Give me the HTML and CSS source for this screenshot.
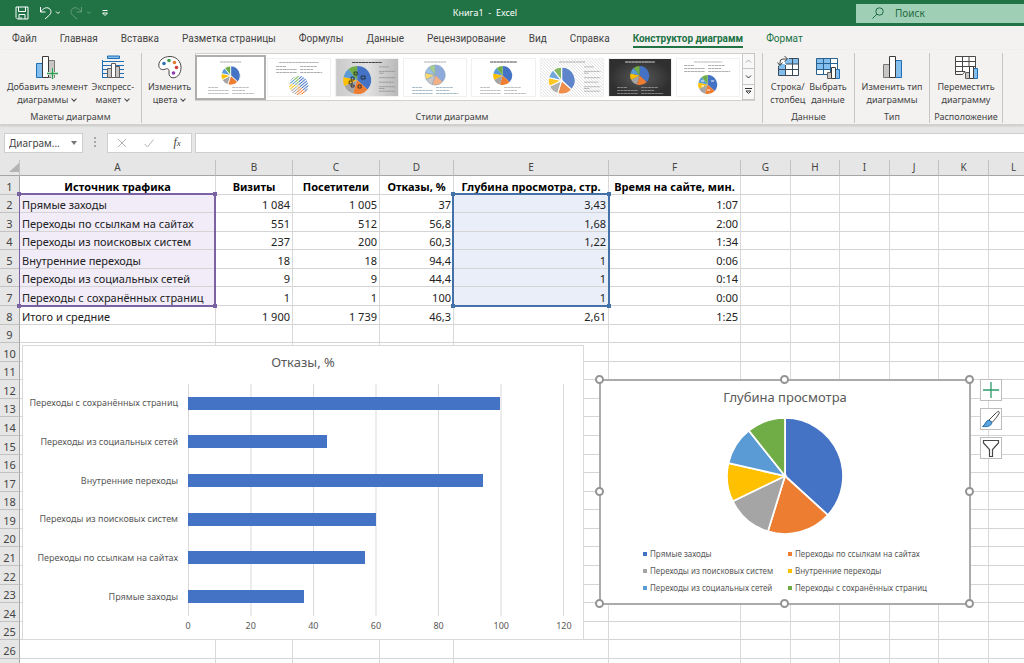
FILE: index.html
```html
<!DOCTYPE html>
<html lang="ru">
<head>
<meta charset="utf-8">
<title>Книга1 - Excel</title>
<link rel="stylesheet" href="styles.css">
</head>
<body>
<svg class="defs" aria-hidden="true">
  <defs>
    <symbol id="pie" viewBox="-100 -100 200 200" overflow="visible">
      <path class="s1" d="M0 0V-100A100 100 0 0 1 73.9 67.4Z"/>
      <path class="s2" d="M0 0L73.9 67.4A100 100 0 0 1 -29.5 95.5Z"/>
      <path class="s3" d="M0 0L-29.5 95.5A100 100 0 0 1 -90.1 43.5Z"/>
      <path class="s4" d="M0 0L-90.1 43.5A100 100 0 0 1 -97.5 -22.2Z"/>
      <path class="s5" d="M0 0L-97.5 -22.2A100 100 0 0 1 -62.4 -78.2Z"/>
      <path class="s6" d="M0 0L-62.4 -78.2A100 100 0 0 1 0 -100Z"/>
    </symbol>
    <symbol id="legend-lines" viewBox="0 0 46 10" overflow="visible">
      <path d="M0 1.500H10M24 1.500H41M0 4.500H21M24 4.500H37M0 7.500H21M24 7.500H46" fill="none" stroke="currentColor" stroke-width=".8" stroke-dasharray="3 .4"/>
    </symbol>
    <symbol id="side-lines" viewBox="0 0 20 30" overflow="visible">
      <path d="M0 1H11M0 6H18M0 8H5M0 13H18M0 18H16M0 23H18M0 25H6M0 28H18" fill="none" stroke="currentColor" stroke-width=".8" stroke-dasharray="3 .4"/>
    </symbol>
    <pattern id="hatch" width="3" height="3" patternUnits="userSpaceOnUse">
      <path d="M0 0L3 3" stroke="#d4d4d4" stroke-width=".7"/>
    </pattern>
    <pattern id="stripes" width="14" height="14" patternUnits="userSpaceOnUse" patternTransform="rotate(-40)">
      <path d="M0 4H14" stroke="#fff" stroke-width="8"/>
    </pattern>
    <linearGradient id="grey" x1="0" x2="1"><stop offset="0" stop-color="#c9c9c9"/><stop offset=".5" stop-color="#e2e2e2"/><stop offset="1" stop-color="#b9b9b9"/></linearGradient>
    <radialGradient id="dark"><stop offset="0" stop-color="#5a5a5a"/><stop offset="1" stop-color="#2f2f2f"/></radialGradient>
  </defs>
</svg>

<header class="titlebar">
  <div class="quick">
    <button aria-label="Сохранить"><svg width="14" height="14" viewBox="0 0 14 14"><path d="M1 1H13V13H2.500L1 11.500ZM3.500 1V5.500H10.500V1M4 13V8.500H10V13M6 13V11"/></svg></button>
    <button aria-label="Отменить"><svg width="21" height="14" viewBox="0 0 21 14"><path d="M1.500 1V6H6.500M1.500 6C4 2.500 7 .8 10 2.300C12.500 4 12.500 7 10.500 9L6 13"/><path d="M17 5.500L19 7.500L21 5.500"/></svg></button>
    <button class="off" aria-label="Повторить"><svg width="21" height="14" viewBox="0 0 21 14"><path d="M11.500 1V6H6.500M11.500 6C9 2.500 6 .8 3 2.300C.5 4 .5 7 2.500 9L7 13"/><path d="M17 5.500L19 7.500L21 5.500"/></svg></button>
    <button class="more" aria-label="Настройка панели"><svg width="8" height="8" viewBox="0 0 8 8"><path d="M1.500 1.500H6.500M1.500 4L4 6.500L6.500 4Z"/></svg></button>
  </div>
  <h1>Книга1&nbsp; -&nbsp; Excel</h1>
  <label class="search"><svg width="12" height="12" viewBox="0 0 12 12"><circle cx="7.500" cy="4.500" r="3.700"/><path d="M4.800 7.200L.5 11.500"/></svg><input type="text" placeholder="Поиск" aria-label="Поиск"></label>
</header>

<nav class="tabs">
  <button>Файл</button><button>Главная</button><button>Вставка</button><button>Разметка страницы</button><button>Формулы</button><button>Данные</button><button>Рецензирование</button><button>Вид</button><button>Справка</button><button class="active">Конструктор диаграмм</button><button class="context">Формат</button>
</nav>

<section class="ribbon">
  <div class="group g-layouts">
    <div class="tools">
      <button><svg width="24" height="24" viewBox="0 0 24 24"><path d="M1.500 8.500H7.500V22.500H1.500Z" fill="#83beec" stroke="#1e6fb5"/><path d="M13.500 5.500H19.500V22.500H13.500Z" fill="#c8c6c4" stroke="#797774"/><path d="M7.500 1.500H13.500V22.500H7.500Z" fill="#fff" stroke="#3b3a39"/><path d="M17.500 13V24M12 18.500H23" stroke="#f3f2f1" stroke-width="3"/><path d="M17.500 13V24M12 18.500H23" stroke="#2e9b50" stroke-width="1.500"/></svg><span>Добавить элемент<br>диаграммы<i></i></span></button>
      <button><svg width="24" height="24" viewBox="0 0 24 24"><path d="M6.500 1H18.500V3.500H6.500Z" fill="#83beec" stroke="#1e6fb5"/><path d="M1.500 5V23M1.500 6.500H23M1.500 10.500H23M1.500 14.500H23M1.500 18.500H23M1.500 22.500H23" fill="none" stroke="#1e6fb5"/><path d="M6.500 13.500H10.500V22.500H6.500ZM14.500 11.500H18.500V22.500H14.500Z" fill="#c8c6c4" stroke="#605e5c"/><path d="M10.500 8.500H14.500V22.500H10.500Z" fill="#fff" stroke="#605e5c"/></svg><span>Экспресс-<br>макет<i></i></span></button>
    </div>
    <h2>Макеты диаграмм</h2>
  </div>
  <div class="group g-styles">
    <div class="tools">
      <button><svg width="24" height="24" viewBox="0 0 24 24"><path d="M12 1.500C5.500 1.500 .8 5.500 .8 10C.8 14 4 15.500 7 14.200C9.500 13 11.500 14 11 17C10.500 20 12 22.800 15 22.800C20 22.800 23 18 23 12.500C23 6 18 1.500 12 1.500Z" fill="#fff" stroke="#4a4846"/><circle cx="6" cy="8.500" r="1.800" fill="#2f6fb8"/><circle cx="11" cy="5.500" r="1.800" fill="#3c9b50"/><circle cx="16.500" cy="7.500" r="1.800" fill="#e2772e"/><circle cx="18.500" cy="12.500" r="1.800" fill="#d63b3b"/><circle cx="15.500" cy="18" r="1.800" fill="#8d3db0"/></svg><span>Изменить<br>цвета<i></i></span></button>
      <div class="gallery">
        <div class="thumbs">
          <button class="thumb chosen" aria-label="Стиль 1"><svg viewBox="0 0 62 37"><rect width="62" height="37" fill="#fff"/><path class="cap" d="M21 3H42"/><use href="#pie" x="22" y="7" width="19" height="19" class="gap"/><use href="#legend-lines" x="9" y="27" width="46" height="10" color="#b0b0b0"/></svg></button>
          <button class="thumb" aria-label="Стиль 2"><svg viewBox="0 0 62 37"><rect width="62" height="37" fill="#fff"/><path class="cap wide" d="M11 3.500H51"/><use href="#legend-lines" x="8" y="6" width="46" height="10" color="#9a9a9a"/><use href="#pie" x="21" y="17" width="19" height="19"/><g transform="translate(30.500 26.500) scale(.16)"><circle r="64" fill="url(#stripes)"/></g></svg></button>
          <button class="thumb" aria-label="Стиль 3"><svg viewBox="0 0 62 37"><rect width="62" height="37" fill="url(#grey)"/><path class="cap strong" d="M16 3.500H46"/><use href="#pie" x="7" y="7" width="28" height="28"/><use href="#side-lines" x="43" y="6" width="18" height="29" color="#888"/><path d="M25 17H29V20H25ZM18 13H21V16H18ZM15 18H18V21H15ZM13 22H16V25H13ZM15 26H18V28H15ZM22 26H25V29H22Z" fill="none" stroke="#222" stroke-width=".8"/></svg></button>
          <button class="thumb" aria-label="Стиль 4"><svg viewBox="0 0 62 37"><rect width="62" height="37" fill="#fff"/><path class="cap" d="M20 3H42"/><use href="#pie" x="21" y="6" width="20" height="20" opacity=".6" stroke="#3d6496" stroke-width="6"/><use href="#legend-lines" x="8" y="27" width="46" height="10" color="#8fa9b8"/></svg></button>
          <button class="thumb" aria-label="Стиль 5"><svg viewBox="0 0 62 37"><rect width="62" height="37" fill="#fff"/><path class="cap strong" d="M18 3H45"/><use href="#pie" x="21" y="7" width="19" height="19"/><use href="#legend-lines" x="8" y="27" width="46" height="10" color="#b0b0b0"/></svg></button>
          <button class="thumb" aria-label="Стиль 6"><svg viewBox="0 0 62 37"><rect width="62" height="37" fill="#fff"/><rect width="62" height="37" fill="url(#hatch)"/><path class="cap" d="M18 3H44"/><use href="#pie" x="7" y="8" width="27" height="27" class="gap" opacity=".85"/><use href="#side-lines" x="43" y="6" width="18" height="29" color="#999"/></svg></button>
          <button class="thumb" aria-label="Стиль 7"><svg viewBox="0 0 62 37"><rect width="62" height="37" fill="url(#dark)"/><path class="cap pale" d="M16 3H46"/><use href="#pie" x="21" y="7" width="19" height="19"/><use href="#legend-lines" x="8" y="27" width="46" height="10" color="#999"/></svg></button>
          <button class="thumb" aria-label="Стиль 8"><svg viewBox="0 0 62 37"><rect width="62" height="37" fill="#fff"/><path class="cap wide" d="M17 3H45"/><use href="#legend-lines" x="7" y="5" width="46" height="10" color="#9a9a9a"/><use href="#pie" x="21" y="16" width="19" height="19"/><path d="M34 22H37M24 27H27M30 31H33M24 22H27" stroke="#fff" stroke-width="1"/></svg></button>
        </div>
        <div class="scroll">
          <button class="off" aria-label="Вверх"><svg width="7" height="7" viewBox="0 0 7 7"><path d="M1 4.500L3.500 2L6 4.500"/></svg></button>
          <button aria-label="Вниз"><svg width="7" height="7" viewBox="0 0 7 7"><path d="M1 2.500L3.500 5L6 2.500"/></svg></button>
          <button aria-label="Ещё"><svg width="7" height="7" viewBox="0 0 7 7"><path d="M0 .5H7M1 3L3.500 5.500L6 3Z"/></svg></button>
        </div>
      </div>
    </div>
    <h2>Стили диаграмм</h2>
  </div>
  <div class="group g-data">
    <div class="tools">
      <button><svg width="24" height="24" viewBox="0 0 24 24"><path d="M2.500 3.500H22.500V20.500H2.500Z" fill="#fff"/><path d="M2.500 9H9V20.500H2.500ZM9 3.500H22.500V9H9Z" fill="#83beec"/><path d="M2.500 11V20.500H22.500V3.500H13M2.500 14.500H22.500M10 9H22.500M9.500 10V20.500M16.500 3.500V20.500" fill="none" stroke="#3b4a58"/><path d="M4 9V7A3 3 0 0 1 7 4H10" fill="none" stroke="#f3f2f1" stroke-width="4"/><path d="M4 10V7A3 3 0 0 1 7 4H11M1.500 7.500L4 10.500L6.500 7.500M8.500 1L11.500 4L8.500 6.500" fill="none" stroke="#4a4846"/></svg><span>Строка/<br>столбец</span></button>
      <button><svg width="24" height="24" viewBox="0 0 24 24"><path d="M.5 3.500H21.500V19.500H.5Z" fill="#fff"/><path d="M.5 3.500H14.500V14.500H.5Z" fill="#83beec"/><path d="M.5 3.500H21.500V19.500H.5ZM.5 8.500H21.500M.5 14.500H21.500M7.500 3.500V19.500M14.500 3.500V19.500" fill="none" stroke="#27618f"/><path d="M11.500 17.500H15.500V23.500H11.500Z" fill="#c8c6c4" stroke="#605e5c"/><path d="M19.500 14.500H23.500V23.500H19.500Z" fill="#83beec" stroke="#1e6fb5"/><path d="M15.500 12.500H19.500V23.500H15.500Z" fill="#fff" stroke="#3b3a39"/></svg><span>Выбрать<br>данные</span></button>
    </div>
    <h2>Данные</h2>
  </div>
  <div class="group g-type">
    <div class="tools">
      <button><svg width="24" height="24" viewBox="0 0 24 24"><path d="M3.500 9.500H9.500V22.500H3.500Z" fill="#c8c6c4" stroke="#797774"/><path d="M15.500 5.500H21.500V22.500H15.500Z" fill="#83beec" stroke="#1e6fb5"/><path d="M9.500 1.500H15.500V22.500H9.500Z" fill="#fff" stroke="#3b3a39"/></svg><span>Изменить тип<br>диаграммы</span></button>
    </div>
    <h2>Тип</h2>
  </div>
  <div class="group g-place">
    <div class="tools">
      <button><svg width="24" height="24" viewBox="0 0 24 24"><path d="M1.500 1.500H21.500V19.500H8L6 16.500H1.500Z" fill="#fff"/><path d="M1.500 1.500H21.500V13M1.500 1.500V19.500H8.500L11 16.500M1.500 6.500H21.500M1.500 11.500H21.500M8.500 1.500V16M15 1.500V11M1.500 16.500H11" fill="none" stroke="#4a4846"/><path d="M11.500 17.500H15.500V23.500H11.500Z" fill="#c8c6c4" stroke="#605e5c"/><path d="M19.500 13.500H23.500V23.500H19.500Z" fill="#83beec" stroke="#1e6fb5"/><path d="M15.500 11.500H19.500V23.500H15.500Z" fill="#fff" stroke="#3b3a39"/></svg><span>Переместить<br>диаграмму</span></button>
    </div>
    <h2>Расположение</h2>
  </div>
</section>

<section class="formula">
  <div class="namebox"><input type="text" value="Диаграм..." aria-label="Имя"><button aria-label="Список имён"><svg width="6" height="4" viewBox="0 0 6 4"><path d="M0 0H6L3 4Z"/></svg></button></div>
  <svg class="dots" width="3" height="11" viewBox="0 0 3 11"><path d="M.5 0H2.500V2H.5ZM.5 4H2.500V6H.5ZM.5 8H2.500V10H.5Z"/></svg>
  <div class="entry">
    <button aria-label="Отмена"><svg width="10" height="10" viewBox="0 0 10 10"><path d="M1 1L9 9M9 1L1 9"/></svg></button>
    <button aria-label="Ввод"><svg width="10" height="10" viewBox="0 0 10 10"><path d="M.5 6L3.500 9L9.500 1.500"/></svg></button>
    <button class="fx" aria-label="Вставить функцию">f<small>x</small></button>
  </div>
  <input class="expression" type="text" aria-label="Строка формул">
</section>

<main class="sheet">
  <table>
    <colgroup><col class="c-n"><col class="c-a"><col class="c-b"><col class="c-c"><col class="c-d"><col class="c-e"><col class="c-f"><col class="c-g"><col class="c-h"><col class="c-g"><col class="c-h"><col class="c-g"><col class="c-g"></colgroup>
    <thead><tr><th class="corner"><svg width="10" height="9" viewBox="0 0 10 9"><path d="M10 0V9H0Z"/></svg></th><th>A</th><th>B</th><th>C</th><th>D</th><th>E</th><th>F</th><th>G</th><th>H</th><th>I</th><th>J</th><th>K</th><th>L</th></tr></thead>
    <tbody id="rows">
      <tr class="heads"><th>1</th><td>Источник трафика</td><td>Визиты</td><td>Посетители</td><td>Отказы, %</td><td>Глубина просмотра, стр.</td><td>Время на сайте, мин.</td></tr>
      <tr class="picked"><th>2</th><td>Прямые заходы</td><td>1 084</td><td>1 005</td><td>37</td><td>3,43</td><td>1:07</td></tr>
      <tr class="picked"><th>3</th><td>Переходы по ссылкам на сайтах</td><td>551</td><td>512</td><td>56,8</td><td>1,68</td><td>2:00</td></tr>
      <tr class="picked"><th>4</th><td>Переходы из поисковых систем</td><td>237</td><td>200</td><td>60,3</td><td>1,22</td><td>1:34</td></tr>
      <tr class="picked"><th>5</th><td>Внутренние переходы</td><td>18</td><td>18</td><td>94,4</td><td>1</td><td>0:06</td></tr>
      <tr class="picked"><th>6</th><td>Переходы из социальных сетей</td><td>9</td><td>9</td><td>44,4</td><td>1</td><td>0:14</td></tr>
      <tr class="picked"><th>7</th><td>Переходы с сохранённых страниц</td><td>1</td><td>1</td><td>100</td><td>1</td><td>0:00</td></tr>
      <tr><th>8</th><td>Итого и средние</td><td>1 900</td><td>1 739</td><td>46,3</td><td>2,61</td><td>1:25</td></tr>
    </tbody>
  </table>

  <div class="range names"><b></b><b></b><b></b><b></b></div>
  <div class="range values"><b></b><b></b><b></b><b></b></div>

  <figure class="chart bars">
    <figcaption>Отказы, %</figcaption>
    <div class="body">
      <ul class="cats"><li>Переходы с сохранённых страниц</li><li>Переходы из социальных сетей</li><li>Внутренние переходы</li><li>Переходы из поисковых систем</li><li>Переходы по ссылкам на сайтах</li><li>Прямые заходы</li></ul>
      <div class="plot"><div><i style="width:83.33%"></i></div><div><i style="width:37%"></i></div><div><i style="width:78.67%"></i></div><div><i style="width:50.25%"></i></div><div><i style="width:47.33%"></i></div><div><i style="width:30.83%"></i></div></div>
      <div class="axis"><span>0</span><span>20</span><span>40</span><span>60</span><span>80</span><span>100</span><span>120</span></div>
    </div>
  </figure>

  <figure class="chart depth">
    <figcaption>Глубина просмотра</figcaption>
    <svg class="pie" width="116" height="116" viewBox="0 0 116 116"><use href="#pie" width="116" height="116"/></svg>
    <ul class="legend"><li class="k1">Прямые заходы</li><li class="k2">Переходы по ссылкам на сайтах</li><li class="k3">Переходы из поисковых систем</li><li class="k4">Внутренние переходы</li><li class="k5">Переходы из социальных сетей</li><li class="k6">Переходы с сохранённых страниц</li></ul>
    <div class="handles"><b></b><b></b><b></b><b></b><b></b><b></b><b></b><b></b></div>
  </figure>

  <div class="side">
    <button aria-label="Элементы диаграммы"><svg width="20" height="20" viewBox="0 0 20 20"><path d="M10 2V18M2 10H18" stroke="#2e9b6a" stroke-width="1.300"/></svg></button>
    <button aria-label="Стили диаграмм"><svg width="20" height="20" viewBox="0 0 20 20"><path d="M8 11L15.500 3.500C17 2 19 2 18 4.500C16 8 13.500 11 11 13.500Z" fill="#fff" stroke="#4a4846"/><path d="M8 11L11 13.500C10 17.500 6 18 1.500 17.500C4 16.500 4.500 11.500 8 11Z" fill="#5ba3dc" stroke="#1e6fa8"/></svg></button>
    <button aria-label="Фильтры диаграммы"><svg width="20" height="20" viewBox="0 0 20 20"><path d="M2.500 2.500H17.500V5L11.500 11.500V18.500H8.500V11.500L2.500 5Z" fill="#fff" stroke="#4a4846" stroke-width="1.200"/></svg></button>
  </div>
</main>
<script src="sheet.js"></script>
</body>
</html>
```
FILE: styles.css
```css
:root {
  --ui: "Noto Sans", "Open Sans", sans-serif;
  --narrow: Roboto, "Noto Sans", sans-serif;
  --green: #217346;
}

* { box-sizing: border-box; }

body {
  margin: 0;
  height: 100vh;
  display: flex;
  flex-direction: column;
  overflow: hidden;
  background: #e6e6e6;
  color: #444;
  font: 10px/12px var(--ui);
}

button, input {
  margin: 0;
  padding: 0;
  border: 0;
  background: none;
  color: inherit;
  font: inherit;
}

h1, h2, ul, figure { margin: 0; padding: 0; font-weight: normal; list-style: none; }
svg { display: block; }
.defs { position: absolute; width: 0; height: 0; }

.s1 { fill: #4472c4; }
.s2 { fill: #ed7d31; }
.s3 { fill: #a5a5a5; }
.s4 { fill: #ffc000; }
.s5 { fill: #5b9bd5; }
.s6 { fill: #70ad47; }

/* Title bar */
.titlebar {
  display: grid;
  grid-template-columns: 114px 1fr 168px;
  align-items: center;
  height: 26px;
  background: var(--green);
  color: #fff;
}
.quick { display: flex; align-items: center; gap: 10px; padding-left: 15px; }
.quick svg { fill: none; stroke: #fff; }
.quick .off { opacity: .3; }
.titlebar h1 { font-size: 9px; text-align: center; }
.search {
  display: flex;
  align-items: center;
  gap: 11px;
  height: 19px;
  padding-left: 16px;
  background: #9fcfb5;
  color: #1e6b41;
}
.search svg { fill: none; stroke: #1e6b41; }
.search input { flex: 1; min-width: 0; }
.search input::placeholder { color: #1e6b41; opacity: 1; }

/* Tabs */
.tabs {
  display: flex;
  align-items: flex-end;
  gap: 23px;
  height: 24px;
  padding: 0 0 2px 12px;
  background: #f3f2f1;
  white-space: nowrap;
  font-family: var(--narrow);
}
.tabs button { height: 18px; padding-top: 2px; border-bottom: 2px solid transparent; }
.tabs .active { border-color: var(--green); color: var(--green); font-weight: bold; }
.tabs .context { color: var(--green); }

/* Ribbon */
.ribbon {
  display: flex;
  height: 75px;
  padding: 3px 0 1px;
  background: #f3f2f1;
  border-bottom: 1px solid #d2d0ce;
  box-shadow: 0 1px 2px #c8c6c4;
}
.group {
  display: flex;
  flex-direction: column;
  justify-content: space-between;
  border-right: 1px solid #c8c6c4;
}
.group h2 { font-size: 9px; text-align: center; line-height: 12px; }
.tools { display: flex; justify-content: center; gap: 4px; }
.tools > button {
  display: flex;
  flex-direction: column;
  align-items: center;
  gap: 1px;
  padding-top: 2px;
  white-space: nowrap;
}
.tools > button span { font-size: 9px; line-height: 13px; }
.tools i {
  display: inline-block;
  width: 4px;
  height: 4px;
  margin: 0 1px 2px 4px;
  border: solid #444;
  border-width: 0 1px 1px 0;
  transform: rotate(45deg);
}
.g-layouts { width: 142px; }
.g-styles { width: 621px; }
.g-styles .tools { justify-content: flex-start; padding-left: 6px; }
.g-data { width: 92px; }
.g-type { width: 75px; }
.g-place { width: 73px; }

.gallery {
  display: flex;
  width: 560px;
  height: 48px;
  border: 1px solid #d2d0ce;
  background: #fff;
}
.thumbs {
  flex: 1;
  display: grid;
  grid-template-columns: repeat(8, 1fr);
  gap: 6px;
  align-items: center;
  padding: 0 3px;
}
.thumb { outline: 1px solid #f0f0f0; }
.thumb svg { width: 100%; height: 37px; }
.thumb.chosen { outline: 2px solid #b0aeac; outline-offset: 2px; }
.gap { stroke: #fff; stroke-width: 8px; }
.cap { fill: none; stroke: #aaa; stroke-width: 1px; stroke-dasharray: 3 .3; }
.cap.wide { stroke: #b4b4b4; }
.cap.strong { stroke: #444; }
.cap.pale { stroke: #ddd; }
.scroll { display: grid; width: 12px; grid-template-rows: repeat(3, 1fr); }
.scroll button { display: grid; place-items: center; border: 1px solid #c8c6c4; margin: -1px -1px 0 0; background: #f8f8f8; }
.scroll svg { fill: none; stroke: #333; }
.scroll .off svg { stroke: #aaa; }

/* Formula bar */
.formula {
  display: flex;
  align-items: center;
  height: 35px;
  padding-left: 4px;
}
.namebox, .entry, .expression { height: 20px; background: #fff; border: 1px solid #cfcfcf; }
.namebox { display: flex; align-items: center; width: 79px; padding: 0 5px 0 4px; }
.namebox input { flex: 1; min-width: 0; }
.namebox svg { fill: #777; }
.dots { width: 24px; fill: #a8a8a8; }
.entry { display: grid; grid-template-columns: repeat(3, 1fr); width: 85px; margin-right: 3px; }
.entry button { display: grid; place-items: center; }
.entry svg { fill: none; stroke: #b4b4b4; }
.entry .fx { display: block; font: italic 12px/16px "Liberation Serif", serif; color: #444; }
.fx small { font-size: 9px; }
.expression { flex: 1; min-width: 0; border-right: 0; }

/* Sheet */
.sheet { position: relative; flex: 1; min-height: 0; overflow: hidden; background: #fff; }
.sheet table { width: 1039px; table-layout: fixed; border-spacing: 0; }
.c-n { width: 20px; }
.c-a { width: 196px; }
.c-b { width: 77px; }
.c-c { width: 87px; }
.c-d { width: 74px; }
.c-e { width: 155px; }
.c-f { width: 132px; }
.c-g { width: 50px; }
.c-h { width: 49px; }

th { padding: 0; font-weight: normal; background: #e6e6e6; }
thead th { height: 16px; font-size: 10px; line-height: 15px; border-right: 1px solid #c2c2c2; border-bottom: 1px solid #a6a6a6; }
.corner svg { margin-left: auto; fill: #b4b4b4; }
tbody th { font-size: 11px; line-height: 15px; padding-top: 2px; border-right: 1px solid #a6a6a6; border-bottom: 1px solid #c2c2c2; }
tbody tr { height: 19px; }
tbody tr:nth-child(7n+2), tbody tr:nth-child(7n+4), tbody tr:nth-child(7n+6) { height: 18px; }
td {
  padding: 2px 2px 0;
  border-right: 1px solid #d9d9d9;
  border-bottom: 1px solid #d4d4d4;
  color: #222;
  font-size: 11px;
  line-height: 15px;
  text-align: right;
  white-space: nowrap;
}
td:nth-child(2) { text-align: left; }
tbody .heads td { text-align: center; font-weight: bold; color: #000; }
.picked td:nth-child(2) { background: #f1ecf8; }
.picked td:nth-child(6) { background: #e9eef9; }

.range { position: absolute; top: 33px; height: 114px; border: 2px solid; pointer-events: none; }
.range.names { left: 19px; width: 197px; color: #7b62a3; border-left-width: 1px; }
.range.values { left: 452px; width: 158px; color: #4472a8; }
.range b { position: absolute; width: 4px; height: 4px; background: currentColor; }
.range b:nth-child(1) { left: -3px; top: -3px; }
.range b:nth-child(2) { right: -3px; top: -3px; }
.range b:nth-child(3) { left: -3px; bottom: -3px; }
.range b:nth-child(4) { right: -3px; bottom: -3px; }

/* Charts */
.chart { position: absolute; background: #fff; color: #595959; }
.chart figcaption { font-size: 13px; line-height: 18px; text-align: center; }
.bars { left: 22px; top: 185px; width: 562px; padding: 7px 19px 3px 0; border: 1px solid #d9d9d9; }
.bars figcaption { margin-right: -19px; }
.bars .body { display: grid; grid-template-columns: 165px 1fr; grid-template-rows: 232px 20px; margin-top: 13px; }
.cats, .plot { display: grid; grid-auto-rows: 1fr; align-items: center; }
.cats { padding-right: 10px; text-align: right; font-size: 9px; white-space: nowrap; }
.plot {
  border-right: 1px solid #d9d9d9;
  background: linear-gradient(to right, #d9d9d9 1px, transparent 1px) 0 0 / calc(100% / 6) 100%;
}
.plot i { display: block; height: 13px; background: #4472c4; }
.axis { grid-column: 2; display: flex; justify-content: space-between; align-items: center; margin: 0 -15px; font-size: 9px; }
.axis span { width: 30px; text-align: center; }

.depth { left: 599px; top: 219px; width: 372px; padding: 7px 0; border: 2px solid #ababab; }
.pie { margin: 12px auto 11px; overflow: visible; stroke: #fff; stroke-width: 3px; }
.legend { display: grid; grid-template-columns: 145px 1fr; grid-auto-rows: 17px; align-items: center; padding-left: 42px; font-size: 8px; white-space: nowrap; }
.legend li { display: flex; align-items: center; gap: 3px; }
.legend li::before { content: ""; width: 4px; height: 4px; background: var(--key); }
.k1 { --key: #4472c4; }
.k2 { --key: #ed7d31; }
.k3 { --key: #a5a5a5; }
.k4 { --key: #ffc000; }
.k5 { --key: #5b9bd5; }
.k6 { --key: #70ad47; }
.handles { position: absolute; inset: -1px; }
.handles b { position: absolute; width: 9px; height: 9px; margin: -5px; border: 2px solid #949494; border-radius: 50%; background: #fff; }
.handles b:nth-child(1) { left: 0; top: 0; }
.handles b:nth-child(2) { left: 50%; top: 0; }
.handles b:nth-child(3) { left: 100%; top: 0; }
.handles b:nth-child(4) { left: 0; top: 50%; }
.handles b:nth-child(5) { left: 100%; top: 50%; }
.handles b:nth-child(6) { left: 0; top: 100%; }
.handles b:nth-child(7) { left: 50%; top: 100%; }
.handles b:nth-child(8) { left: 100%; top: 100%; }

.side { position: absolute; left: 980px; top: 219px; display: grid; gap: 7px; }
.side button { display: grid; place-items: center; width: 22px; height: 22px; border: 1px solid #bdbdbd; background: #fff; }
.side svg { fill: none; }
```
FILE: sheet.js
```js
// Number the empty rows and pad every row with blank cells up to column L.
const body = document.getElementById('rows');
const lastRow = 26;
for (let n = body.rows.length + 1; n <= lastRow; n++) {
  const head = document.createElement('th');
  head.textContent = n;
  body.insertRow().append(head);
}
// One partly visible row closes the grid at the bottom edge.
body.insertRow().append(document.createElement('th'));
for (const row of body.rows) {
  while (row.cells.length < 13) row.insertCell();
}
```
